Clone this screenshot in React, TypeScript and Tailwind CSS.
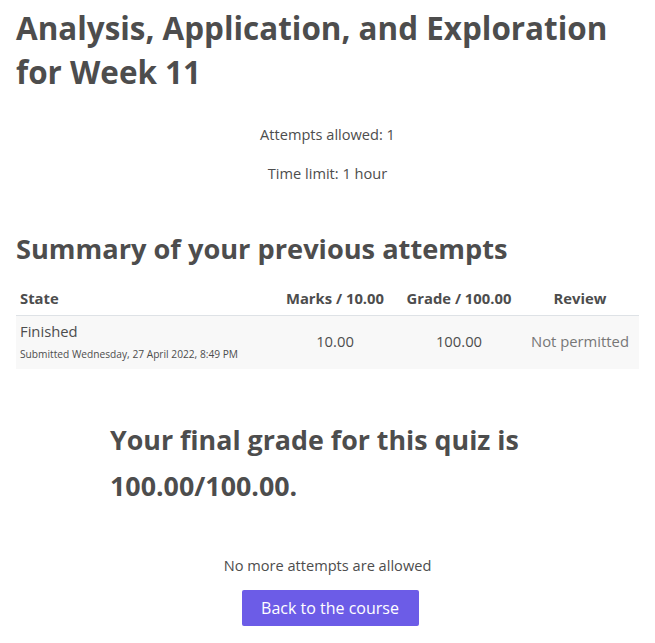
const App = () => {
  return (
    <div className="min-h-screen bg-white px-4 text-[#4d4d4d] font-['Open_Sans',sans-serif]">
      {/* Title */}
      <h1 className="pt-[6px] text-[31.4px] leading-[44px] font-bold">
        Analysis, Application, and Exploration for Week 11
      </h1>

      {/* Quiz info */}
      <div className="mt-[30px] text-center text-[14.6px]">
        <p className="leading-[20px]">Attempts allowed: 1</p>
        <p className="mt-[19px] leading-[20px]">Time limit: 1 hour</p>
      </div>

      {/* Summary */}
      <h2 className="mt-[47px] text-[27.2px] leading-[38px] font-bold">
        Summary of your previous attempts
      </h2>

      <table className="mt-[13px] w-full text-[14.8px]">
        <thead>
          <tr className="border-b border-[#dee2e6]">
            <th className="py-[6px] pl-1 text-left font-bold text-[14.8px]">State</th>
            <th className="py-[6px] w-[124px] text-center font-bold text-[14.8px]">Marks / 10.00</th>
            <th className="py-[6px] w-[124px] text-center font-bold text-[14.8px]">Grade / 100.00</th>
            <th className="py-[6px] w-[118px] text-center font-bold text-[14.8px]">Review</th>
          </tr>
        </thead>
        <tbody>
          <tr className="bg-[#f8f8f8]">
            <td className="pl-1 pt-[4px] pb-[8px] text-left align-top">
              <div className="leading-[22px]">Finished</div>
              <div className="mt-[5px] text-[10.2px] leading-[14px]">
                Submitted Wednesday, 27 April 2022, 8:49 PM
              </div>
            </td>
            <td className="pb-[3px] text-center">10.00</td>
            <td className="pb-[3px] text-center">100.00</td>
            <td className="pb-[3px] text-center text-[#777]">Not permitted</td>
          </tr>
        </tbody>
      </table>

      {/* Final grade */}
      <div className="mt-[48px] px-[94px]">
        <h3 className="text-[26.8px] leading-[46px] font-bold">
          Your final grade for this quiz is 100.00/100.00.
        </h3>
      </div>

      {/* Actions */}
      <div className="mt-[46px] flex flex-col items-center">
        <p className="text-[14.6px] leading-[20px]">No more attempts are allowed</p>
        <button className="mt-[15px] ml-[5px] h-[36px] w-[177px] rounded-[2px] bg-[#6c5ce7] text-[16px] text-white">
          Back to the course
        </button>
      </div>
    </div>
  )
}

export default App
